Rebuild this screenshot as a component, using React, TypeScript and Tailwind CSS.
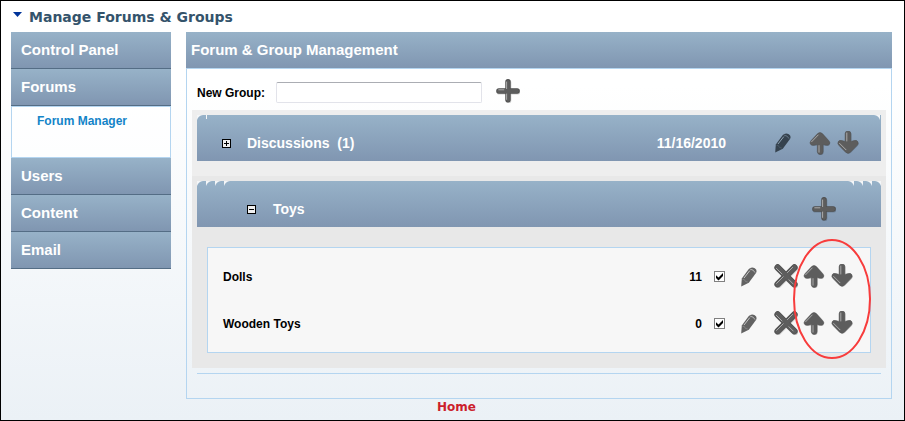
import { useState } from "react";
import type { ReactNode } from "react";

const BAR = "bg-linear-to-b from-[#97b2c8] to-[#8096b1] text-white font-bold";

type GlyphProps = { shape: string; lights: string; width: number };

function Glyph({ shape, lights, width }: GlyphProps) {
  return (
    <svg viewBox="0 0 24 24" className="block size-6" aria-hidden="true">
      <g strokeLinecap="round" strokeLinejoin="round" fill="none">
        <path d={shape} transform="translate(0.5 0.7)" stroke="#000" strokeOpacity="0.18" strokeWidth={width + 0.3} />
        <path d={shape} stroke="#4f4f4f" strokeWidth={width} />
        <path d={shape} stroke="#5d5d5d" strokeWidth={width - 1.6} />
        <path d={lights} stroke="#b4b4b4" strokeWidth="0.9" />
      </g>
    </svg>
  );
}

function PlusIcon() {
  return <Glyph width={5.4} shape="M12 2.8v18M2.9 12h18.2" lights="M10.6 3v6.6M2.8 10.8h5M10.6 15v5.4" />;
}

function CrossIcon() {
  return (
    <Glyph
      width={6.4}
      shape="M3.6 3.4l16.8 16.8M20.4 3.4L3.6 20.2"
      lights="M2.4 4.4l5.6 5.6M2.6 19.4l6.6-6.6M13.4 8.6L18.6 3.4M15 15.8l4.2 4.2"
    />
  );
}

function ArrowIcon({ down = false }: { down?: boolean }) {
  const body = down
    ? "M9.1 2.8Q9.1 0 12 0T14.9 2.8V10.4L18 9.6Q20.8 8.8 21.9 10.8Q22.9 12.8 20.9 14.6L14.4 21.2Q12 23.4 9.6 21.2L3.1 14.6Q1.1 12.8 2.1 10.8Q3.2 8.8 6 9.6L9.1 10.4Z"
    : "M9.3 20.6Q9.3 23.4 12.2 23.4T15.1 20.6V13.6L17.8 14.2Q20.6 14.8 21.5 13Q22.4 11.2 20.6 9.4L14.4 2.6Q12 .2 9.6 2.6L3.2 9.4Q1.4 11.2 2.3 13Q3.4 14.8 6.2 14.2L9.3 13.6Z";
  const lights = down ? "M10.8 2V10M3.6 12.4L10 18.8" : "M11 14.6V21.2M3.6 10.8L10.2 4";
  return (
    <svg viewBox="0 0 24 24" className="block size-6" aria-hidden="true">
      <path d={body} transform="translate(0.5 0.6)" fill="#000" fillOpacity="0.2" />
      <path d={body} fill="#5d5d5d" stroke="#505050" strokeWidth="0.5" />
      <path d={lights} fill="none" stroke="#b4b4b4" strokeWidth="0.9" strokeLinecap="round" />
    </svg>
  );
}

function PencilIcon({ dark = false }: { dark?: boolean }) {
  const fill = dark ? "#35424e" : "#626262";
  return (
    <svg viewBox="0 0 20 20" className="block size-5" aria-hidden="true">
      <path d="M2.2 19.4L2.8 11.4L9.8 2Q12.4 -.6 15.8 1.2Q18.6 3.2 17 6L9.8 15.8Z" fill={fill} />
      <path d="M5 11L10.8 3.6" stroke={dark ? "#8fa3b3" : "#c6c6c6"} strokeWidth="1" fill="none" />
      <path d="M11.2 2.2Q14.6 2.4 16 5.6" stroke={dark ? "#718494" : "#cccccc"} strokeWidth="0.8" fill="none" />
      <path d="M3.4 12.2L5.4 12.6L6.4 14.4L8.8 15" stroke={dark ? "#51616f" : "#8d8d8d"} strokeWidth="0.7" fill="none" />
    </svg>
  );
}

function IconButton({ label, children }: { label: string; children: ReactNode }) {
  return (
    <button type="button" aria-label={label} className="block shrink-0 cursor-pointer">
      {children}
    </button>
  );
}

function Toggle({ open, label, onClick }: { open: boolean; label: string; onClick: () => void }) {
  return (
    <button type="button" aria-label={label} aria-expanded={open} onClick={onClick} className="block shrink-0">
      <svg viewBox="0 0 9 9" className="block size-[9px]" shapeRendering="crispEdges" aria-hidden="true">
        <path d="M.5 .5h8v8h-8z" fill="#f0f0f0" stroke="#000" />
        <path d={open ? "M2 4.5h5" : "M2 4.5h5M4.5 2v5"} stroke="#000" />
      </svg>
    </button>
  );
}

function Corners({ repeated = false }: { repeated?: boolean }) {
  const wedges = repeated
    ? "M0 0H6Q1.6 .6 0 5ZM9 0H15Q10.6 .6 9 5ZM18 0H24Q19.6 .6 18 5ZM27 0H33Q28.6 .6 27 5Z"
    : "M0 0H6Q1.4 .6 0 5ZM9 0H10V4H9Z";
  const mirrored = repeated ? wedges : "M1 0H7Q2.4 .6 1 5Z";
  return (
    <>
      <svg viewBox="0 0 34 6" className="absolute top-0 left-0 h-[6px] w-[34px]" aria-hidden="true">
        <path d={wedges} fill="#f4f6f8" />
      </svg>
      <svg viewBox="0 0 34 6" className="absolute top-0 right-0 h-[6px] w-[34px] -scale-x-100" aria-hidden="true">
        <path d={mirrored} fill="#f4f6f8" />
      </svg>
    </>
  );
}

function SideItem({ children }: { children: ReactNode }) {
  return (
    <a href="#" className={`${BAR} block h-[37px] border-b border-[#546d85] pl-2.5 text-[15px] leading-[36px]`}>
      {children}
    </a>
  );
}

function ForumRow({ name, count }: { name: string; count: number }) {
  return (
    <li className="flex h-[47px] items-center pr-4 pl-[15px]">
      <span className="grow">{name}</span>
      <span className="mr-3">{count}</span>
      <span className="mr-3.5 grid size-[11px] shrink-0">
        <input
          type="checkbox"
          defaultChecked
          aria-label={`${name} active`}
          className="peer col-start-1 row-start-1 size-[11px] appearance-none border border-[#808080] bg-white"
        />
        <svg
          viewBox="0 0 11 11"
          className="pointer-events-none invisible col-start-1 row-start-1 size-[11px] peer-checked:visible"
          aria-hidden="true"
        >
          <path d="M2 4.2L4.5 6.6L9 2V5L4.5 9.4L2 7Z" fill="#000" />
        </svg>
      </span>
      <div className="mr-[15px]">
        <IconButton label={`Edit ${name}`}><PencilIcon /></IconButton>
      </div>
      <div className="flex gap-1 pb-0.5">
        <IconButton label={`Delete ${name}`}><CrossIcon /></IconButton>
        <IconButton label={`Move ${name} up`}><ArrowIcon /></IconButton>
        <IconButton label={`Move ${name} down`}><ArrowIcon down /></IconButton>
      </div>
    </li>
  );
}

export default function App() {
  const [discussionsOpen, setDiscussionsOpen] = useState(false);
  const [toysOpen, setToysOpen] = useState(true);

  return (
    <div className="min-h-screen border border-black bg-linear-to-b from-white from-20% to-[#ebf1f6] font-['Liberation_Sans',Arial,sans-serif] text-xs font-bold text-black">
      <h1 className="flex h-[31px] items-center gap-[7px] pl-3 font-['DejaVu_Sans',Verdana,sans-serif] text-sm text-[#34536b]">
        <svg viewBox="0 0 9 5" className="mb-1 h-[5px] w-[9px]" aria-hidden="true">
          <path d="M0 0H9L4.5 5Z" fill="#003399" />
        </svg>
        Manage Forums &amp; Groups
      </h1>

      <div className="flex items-start gap-[15px] pr-3 pl-2.5">
        <nav className="w-40 shrink-0">
          <SideItem>Control Panel</SideItem>
          <SideItem>Forums</SideItem>
          <div className="h-[52px] border border-[#b4d5f0] bg-white/60 pt-1.5 pl-[25px]">
            <a href="#" className="text-[#1384c8]">Forum Manager</a>
          </div>
          <SideItem>Users</SideItem>
          <SideItem>Content</SideItem>
          <SideItem>Email</SideItem>
        </nav>

        <main className="min-w-0 grow">
          <h2 className={`${BAR} h-9 pl-[5px] text-[15px] leading-9`}>Forum &amp; Group Management</h2>
          <div className="border border-[#b4d5f0] px-[5px] pb-6">
            <form className="flex h-[41px] items-center pt-1.5 pl-[5px]" onSubmit={(e) => e.preventDefault()}>
              <label htmlFor="new-group" className="w-[79px]">New Group:</label>
              <input
                id="new-group"
                type="text"
                className="h-[21px] w-[206px] rounded-xs border border-[#e2e3ea] border-t-[#abadb3] bg-white px-1 font-normal outline-none"
              />
              <div className="mb-1 ml-3.5">
                <IconButton label="Add group"><PlusIcon /></IconButton>
              </div>
            </form>

            <section className="bg-[#eeeeee] px-[5px] pt-[5px] pb-[15px]">
              <div className={`${BAR} relative flex h-[46px] items-center pt-2.5 pr-[21px] pl-[25px] text-sm`}>
                <Corners />
                <Toggle open={discussionsOpen} label="Toggle Discussions" onClick={() => setDiscussionsOpen(!discussionsOpen)} />
                <h3 className="ml-4 grow">Discussions&nbsp; (1)</h3>
                <span className="mr-[47px]">11/16/2010</span>
                <div className="mr-[15px]">
                  <IconButton label="Edit Discussions"><PencilIcon dark /></IconButton>
                </div>
                <div className="flex gap-1">
                  <IconButton label="Move Discussions up"><ArrowIcon /></IconButton>
                  <IconButton label="Move Discussions down"><ArrowIcon down /></IconButton>
                </div>
              </div>
            </section>

            <section className="bg-[#e8e8e8] px-[5px] pt-[5px] pb-[15px]">
              <div className={`${BAR} relative flex h-[46px] items-center pt-2.5 pr-[45px] pl-[50px] text-sm`}>
                <Corners repeated />
                <Toggle open={toysOpen} label="Toggle Toys" onClick={() => setToysOpen(!toysOpen)} />
                <h3 className="ml-[17px] grow">Toys</h3>
                <IconButton label="Add forum to Toys"><PlusIcon /></IconButton>
              </div>
              {toysOpen && (
                <div className="relative mx-2.5 mt-5 border border-[#b4d5f0] bg-[#f7f7f7] py-[5px]">
                  <ul>
                    <ForumRow name="Dolls" count={11} />
                    <ForumRow name="Wooden Toys" count={0} />
                  </ul>
                  <svg
                    viewBox="0 0 78 120"
                    className="pointer-events-none absolute -top-[9px] -right-px h-[120px] w-[78px]"
                    aria-hidden="true"
                  >
                    <ellipse cx="39" cy="60" rx="38" ry="59" fill="none" stroke="#f83c3c" strokeWidth="2" />
                  </svg>
                </div>
              )}
            </section>
            <hr className="mx-[5px] mt-[5px] border-[#b4d5f0]" />
          </div>
        </main>
      </div>

      <footer className="pl-2 text-center font-['DejaVu_Sans',Verdana,sans-serif] leading-4">
        <a href="#" className="text-[#cc1f2d]">Home</a>
      </footer>
    </div>
  );
}
